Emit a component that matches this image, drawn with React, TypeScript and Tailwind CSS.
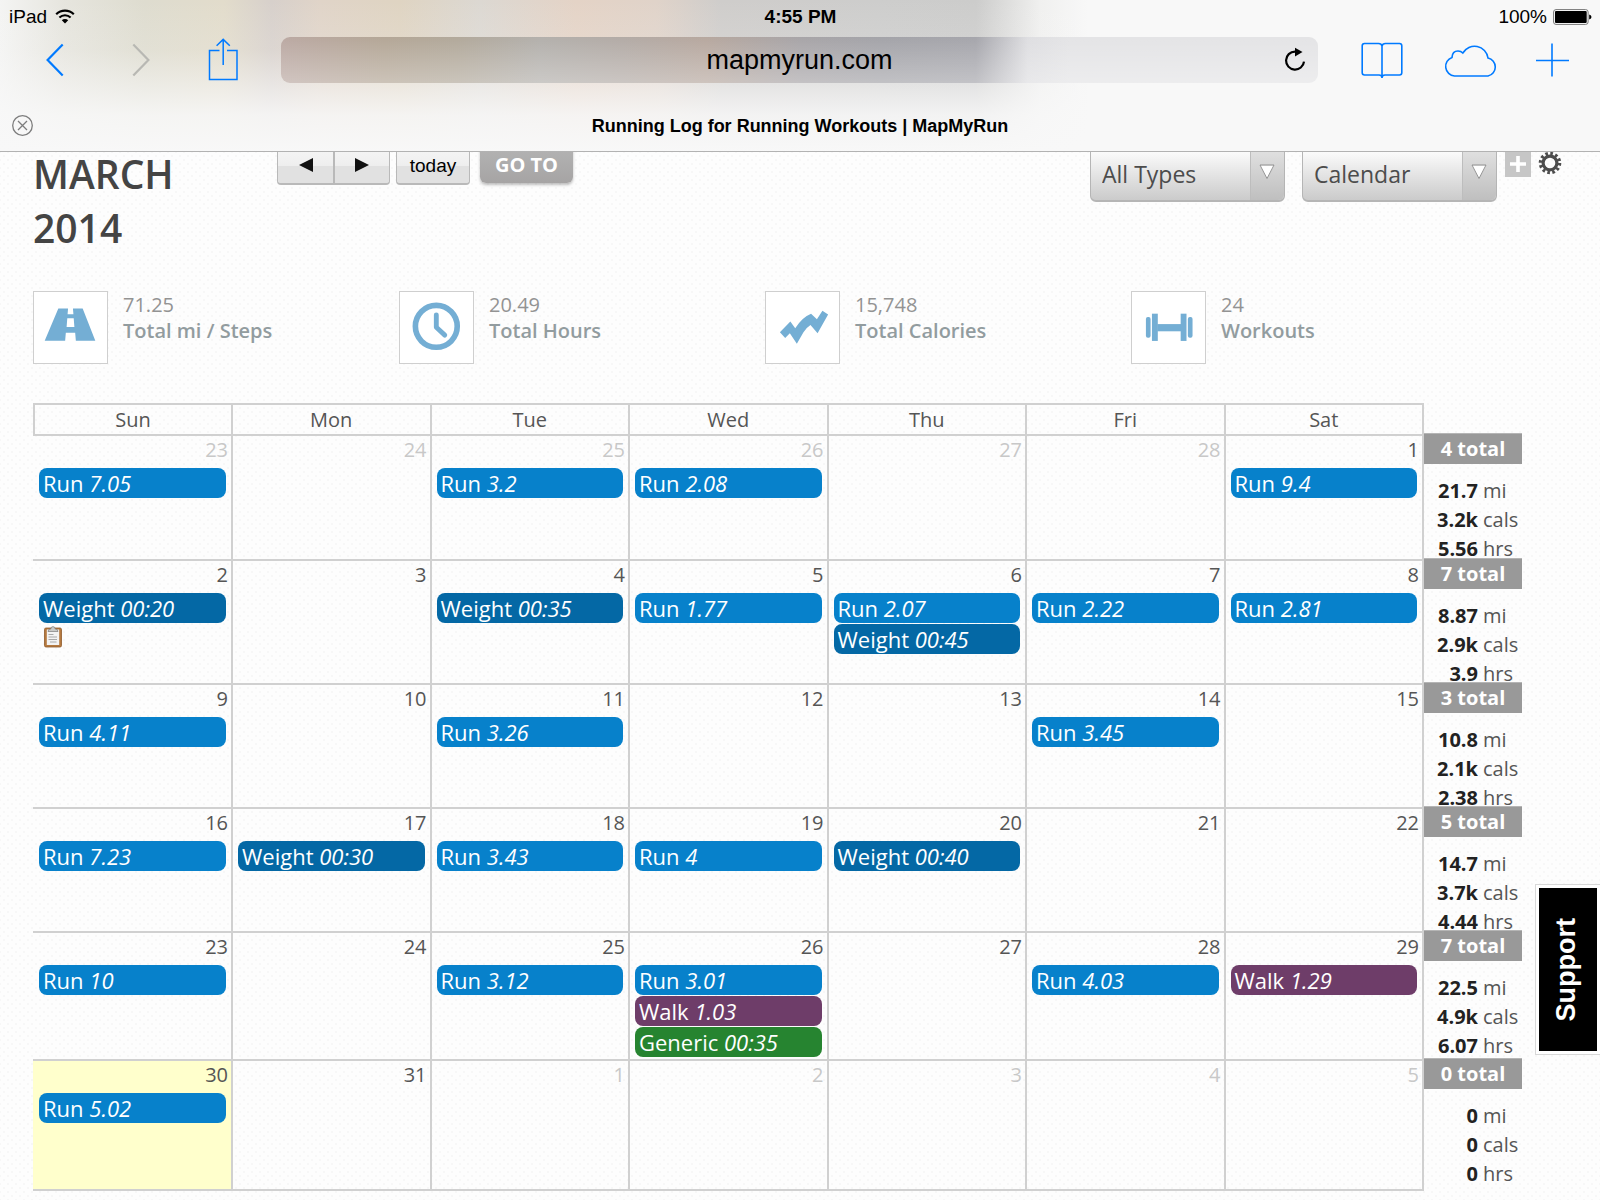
import React from "react";

interface Workout {
  type: "Run" | "Weight" | "Walk" | "Generic";
  value: string;
}

interface Day {
  date: number;
  muted?: boolean;
  today?: boolean;
  note?: boolean;
  workouts?: Workout[];
}

interface Week {
  height: string;
  days: Day[];
  total: number;
  mi: string;
  cals: string;
  hrs: string;
}

const run = (value: string): Workout => ({ type: "Run", value });
const weight = (value: string): Workout => ({ type: "Weight", value });
const walk = (value: string): Workout => ({ type: "Walk", value });
const generic = (value: string): Workout => ({ type: "Generic", value });

const workoutColors = {
  Run: "bg-[#0781cb]",
  Weight: "bg-[#0468a5]",
  Walk: "bg-[#6e3d69]",
  Generic: "bg-[#268430]",
};

const dayNames = ["Sun", "Mon", "Tue", "Wed", "Thu", "Fri", "Sat"];

const weeks: Week[] = [
  {
    height: "h-[125px]",
    days: [
      { date: 23, muted: true, workouts: [run("7.05")] },
      { date: 24, muted: true },
      { date: 25, muted: true, workouts: [run("3.2")] },
      { date: 26, muted: true, workouts: [run("2.08")] },
      { date: 27, muted: true },
      { date: 28, muted: true },
      { date: 1, workouts: [run("9.4")] },
    ],
    total: 4,
    mi: "21.7",
    cals: "3.2k",
    hrs: "5.56",
  },
  {
    height: "h-[124px]",
    days: [
      { date: 2, workouts: [weight("00:20")], note: true },
      { date: 3 },
      { date: 4, workouts: [weight("00:35")] },
      { date: 5, workouts: [run("1.77")] },
      { date: 6, workouts: [run("2.07"), weight("00:45")] },
      { date: 7, workouts: [run("2.22")] },
      { date: 8, workouts: [run("2.81")] },
    ],
    total: 7,
    mi: "8.87",
    cals: "2.9k",
    hrs: "3.9",
  },
  {
    height: "h-[124px]",
    days: [
      { date: 9, workouts: [run("4.11")] },
      { date: 10 },
      { date: 11, workouts: [run("3.26")] },
      { date: 12 },
      { date: 13 },
      { date: 14, workouts: [run("3.45")] },
      { date: 15 },
    ],
    total: 3,
    mi: "10.8",
    cals: "2.1k",
    hrs: "2.38",
  },
  {
    height: "h-[124px]",
    days: [
      { date: 16, workouts: [run("7.23")] },
      { date: 17, workouts: [weight("00:30")] },
      { date: 18, workouts: [run("3.43")] },
      { date: 19, workouts: [run("4")] },
      { date: 20, workouts: [weight("00:40")] },
      { date: 21 },
      { date: 22 },
    ],
    total: 5,
    mi: "14.7",
    cals: "3.7k",
    hrs: "4.44",
  },
  {
    height: "h-[128px]",
    days: [
      { date: 23, workouts: [run("10")] },
      { date: 24 },
      { date: 25, workouts: [run("3.12")] },
      { date: 26, workouts: [run("3.01"), walk("1.03"), generic("00:35")] },
      { date: 27 },
      { date: 28, workouts: [run("4.03")] },
      { date: 29, workouts: [walk("1.29")] },
    ],
    total: 7,
    mi: "22.5",
    cals: "4.9k",
    hrs: "6.07",
  },
  {
    height: "h-[130px]",
    days: [
      { date: 30, today: true, workouts: [run("5.02")] },
      { date: 31 },
      { date: 1, muted: true },
      { date: 2, muted: true },
      { date: 3, muted: true },
      { date: 4, muted: true },
      { date: 5, muted: true },
    ],
    total: 0,
    mi: "0",
    cals: "0",
    hrs: "0",
  },
];

const RoadIcon = () => (
  <svg viewBox="0 0 75 73" className="w-[75px] h-[73px]" fill="#74aed4">
    <path
      fillRule="evenodd"
      d="M25 17h10l-.5 6h6l-.5-6h10l13 33H43l-.7-8H32.7l-.7 8H11zM34.2 27l-.7 9h8l-.7-9z"
    />
  </svg>
);

const ClockIcon = () => (
  <svg
    viewBox="0 0 75 73"
    className="w-[75px] h-[73px]"
    fill="none"
    stroke="#74aed4"
  >
    <circle cx="37.3" cy="35.3" r="21.5" strokeWidth="5.8" />
    <path
      d="M37.3 23.5v12.8l8.7 8"
      strokeWidth="5"
      strokeLinecap="round"
      strokeLinejoin="round"
    />
  </svg>
);

const CaloriesIcon = () => (
  <svg viewBox="0 0 75 73" className="w-[75px] h-[73px]" fill="#74aed4">
    <path d="M14.3 41.3 25 30.3l5 7Q37 26 46.3 22.3l6 5.7L58 19.2l5.800 4L53 42.5 45.7 34Q41 37 38.5 41.5L31.7 53.3l-7.2-10.8-4.8 4.7z" />
  </svg>
);

const DumbbellIcon = () => (
  <svg viewBox="0 0 75 73" className="w-[75px] h-[73px]" fill="#74aed4">
    <rect x="14.3" y="25.7" width="4.8" height="21.4" rx="2" />
    <rect x="20.5" y="22.3" width="6" height="28" />
    <rect x="26" y="33" width="24.5" height="7.4" />
    <rect x="50" y="22.3" width="6" height="28" />
    <rect x="57.4" y="25.7" width="4.8" height="21.4" rx="2" />
  </svg>
);

const stats = [
  { value: "71.25", label: "Total mi / Steps", icon: <RoadIcon /> },
  { value: "20.49", label: "Total Hours", icon: <ClockIcon /> },
  { value: "15,748", label: "Total Calories", icon: <CaloriesIcon /> },
  { value: "24", label: "Workouts", icon: <DumbbellIcon /> },
];

const StatusBar = () => (
  <div className="grid grid-cols-3 items-center h-[37px] pl-[9px] pr-2 pb-1 text-[19px] leading-[30px]">
    <div className="flex items-center gap-2">
      <span>iPad</span>
      <svg viewBox="0 0 20 15" className="w-5 h-[15px]" fill="none" stroke="#000">
        <path d="M1.2 5.2a12.6 12.6 0 0 1 17.6 0" strokeWidth="2.2" />
        <path d="M4.4 8.5a8 8 0 0 1 11.2 0" strokeWidth="2.1" />
        <path d="M10 14.5 6.8 11.2a4.6 4.6 0 0 1 6.4 0z" fill="#000" stroke="none" />
      </svg>
    </div>
    <div className="text-center font-bold">4:55 PM</div>
    <div className="flex items-center justify-end gap-[6px]">
      <span>100%</span>
      <svg viewBox="0 0 39 16" className="w-[39px] h-4">
        <rect x=".6" y=".6" width="34.5" height="14.8" rx="2.4" fill="#fff" stroke="#777" strokeWidth="1" />
        <rect x="2" y="2" width="31.7" height="12" rx="1" fill="#000" />
        <path d="M36.2 5.5q2.3.6 2.3 2.5t-2.3 2.5z" fill="#000" />
      </svg>
    </div>
  </div>
);

const BrowserBar = () => (
  <div className="flex items-center h-[46px] pl-[46px] pr-[30px]">
    <button aria-label="Back">
      <svg viewBox="0 0 18 34" className="w-[18px] h-[34px]" fill="none" stroke="#007aff" strokeWidth="2.2">
        <path d="M16.7 1.5 1.6 17l15.1 15.5" />
      </svg>
    </button>
    <button aria-label="Forward" className="ml-[68px]">
      <svg viewBox="0 0 18 34" className="w-[18px] h-[34px]" fill="none" stroke="#b8b8b3" strokeWidth="2.2">
        <path d="M1.3 1.5 16.4 17 1.3 32.5" />
      </svg>
    </button>
    <button aria-label="Share" className="ml-[58px]">
      <svg viewBox="0 0 30 44" className="w-[30px] h-11" fill="none" stroke="#007aff" strokeWidth="1.5">
        <path d="M11.5 12.5H1.5v29h27.500v-29H19" />
        <path d="M15.2 27V1.6M8.6 7.800l6.600-6.400 6.600 6.400" />
      </svg>
    </button>
    <div className="flex flex-1 items-center h-[46px] ml-[43px] rounded-[9px] bg-[linear-gradient(to_bottom,rgba(255,255,255,0),rgba(255,255,255,0.32)),linear-gradient(to_right,#bba9a3_0%,#b4a797_10%,#b2a99b_17%,#b3b0ac_25%,#b3aba6_33%,#b7a89f_41%,#a8a5a8_50%,#a4a4a9_58%,#a6a6ac_67%,#dedee1_72%,#e4e4e6_76%)]">
      <input
        type="text"
        aria-label="Address"
        defaultValue="mapmyrun.com"
        className="flex-1 min-w-0 ml-[46px] bg-transparent text-center text-[27px] leading-9 outline-none"
      />
      <button aria-label="Reload" className="w-[46px] pl-[12px]">
        <svg viewBox="0 0 22 26" className="w-[22px] h-[26px]" fill="none">
          <path d="M12.5 4.600h-1.500a9 9 0 1 0 9 10" stroke="#000" strokeWidth="2.2" />
          <path d="M11 .8 18.5 5 11 9.400z" fill="#000" />
        </svg>
      </button>
    </div>
    <button aria-label="Bookmarks" className="ml-[43px]">
      <svg viewBox="0 0 42 38" className="w-[42px] h-[38px]" fill="none" stroke="#007aff" strokeWidth="1.6">
        <path d="M21 5Q20.500 2.500 17.500 2.500H3.500Q1.200 2.500 1.200 4.800v27Q1.200 34 3.500 34h14.500q3 0 3 3 0-3 3-3h14.500Q40.800 34 40.800 31.800v-27Q40.800 2.500 38.500 2.500h-14Q21.500 2.500 21 5v32" />
      </svg>
    </button>
    <button aria-label="iCloud tabs" className="ml-[41px]">
      <svg viewBox="0 0 54 36" className="w-[54px] h-9" fill="none" stroke="#007aff" strokeWidth="1.6">
        <path d="M10.500 34A9.600 9.600 0 0 1 8 15.400Q8.300 9 14 9q3 0 4.800 2A13.600 13.600 0 0 1 44 16a9.200 9.200 0 0 1 0 18z" />
      </svg>
    </button>
    <button aria-label="New tab" className="ml-[37px]">
      <svg viewBox="0 0 35 34" className="w-[35px] h-[34px]" stroke="#007aff" strokeWidth="1.6">
        <path d="M1 17.500h33M17 .5v33" />
      </svg>
    </button>
  </div>
);

const BrowserHeader = () => (
  <header className="relative z-10 h-[152px] border-b border-[#b2b2b2] font-['Liberation_Sans',Arial,sans-serif] text-black bg-[linear-gradient(to_bottom,rgba(248,248,248,0)_0px,rgba(248,248,248,0.15)_50px,rgba(248,248,248,0.6)_90px,rgba(248,248,248,0.88)_115px,#f8f8f8_152px),linear-gradient(to_right,#f4f4f3_0%,#e6e5de_4%,#dedccf_9%,#e2dccb_14%,#d7d0cb_17%,#e0d4c8_20%,#dfd4c2_25%,#dcd8d2_30%,#e4d3c6_36%,#e0d3c9_41%,#cfcdcb_45%,#cdcdcc_55%,#cccccb_61%,#f0f0ef_65%,#f8f8f8_68%)]">
    <StatusBar />
    <BrowserBar />
    <div className="flex items-center h-[68px] px-3 pt-[18px]">
      <button aria-label="Close tab">
        <svg viewBox="0 0 22 22" className="w-[22px] h-[22px]" fill="none" stroke="#7d7d7d" strokeWidth="1.3">
          <circle cx="10.500" cy="10.500" r="9.800" />
          <path d="M6 6l9 9M15 6l-9 9" />
        </svg>
      </button>
      <h2 className="flex-1 pr-[22px] text-center text-[18px] font-bold">
        Running Log for Running Workouts | MapMyRun
      </h2>
    </div>
  </header>
);

const Dropdown: React.FC<{ label: string; options: string[] }> = ({
  label,
  options,
}) => (
  <div className="relative w-[195px]">
    <select
      aria-label={label}
      className="appearance-none block w-full h-[55px] pl-[11px] pr-9 rounded-b-md border border-b-2 border-[#b5b5b5] bg-linear-to-b from-white to-[#cbcbcb] text-[23px] text-[#4c4c4c] outline-none"
    >
      {options.map((option) => (
        <option key={option}>{option}</option>
      ))}
    </select>
    <span className="absolute top-px bottom-0.5 right-px flex w-[34px] items-center pl-2 rounded-br-md border-l border-[#bdbdbd] bg-linear-to-b from-[#e2e2e2] to-[#bfbfbf] pointer-events-none">
      <svg viewBox="0 0 16 16" className="w-4 h-4 mb-1" fill="#fff">
        <path d="M1 1.500 8 14.500 15 1.500z" />
        <path d="M1 1h14M1 1l7 13.500L15 1" fill="none" stroke="#8a8a8a" strokeWidth=".9" />
      </svg>
    </span>
  </div>
);

const Toolbar = () => (
  <div className="flex items-start -mt-[5px]">
    <h1 className="w-[244px] shrink-0 text-[39px] leading-[54px] font-semibold text-[#444]">
      <span className="block">MARCH</span>
      <span className="block">2014</span>
    </h1>
    <div className="flex font-['Liberation_Sans',Arial,sans-serif] text-[19px] text-black">
      <button
        aria-label="Previous month"
        className="flex items-center justify-center w-[56px] h-[38px] border-l border-b-2 border-[#b9b9b9] rounded-bl-sm bg-[linear-gradient(to_bottom,#f6f6f6_0%,#eeeeee_52%,#e1e1e1_54%,#e1e1e1_100%)]"
      >
        <svg viewBox="0 0 14 14" className="w-[14px] h-[14px]">
          <path d="M14 0v14L0 7z" fill="#111" />
        </svg>
      </button>
      <button
        aria-label="Next month"
        className="flex items-center justify-center w-[57px] h-[38px] border-r border-l-2 border-b-2 border-[#b9b9b9] rounded-br-sm bg-[linear-gradient(to_bottom,#f6f6f6_0%,#eeeeee_52%,#e1e1e1_54%,#e1e1e1_100%)]"
      >
        <svg viewBox="0 0 14 14" className="w-[14px] h-[14px]">
          <path d="M0 0v14l14-7z" fill="#111" />
        </svg>
      </button>
      <button className="w-[74px] h-[38px] ml-[6px] pt-0.5 border-x border-b-2 border-[#b9b9b9] rounded-b-sm bg-[linear-gradient(to_bottom,#f6f6f6_0%,#eeeeee_52%,#e1e1e1_54%,#e1e1e1_100%)]">
        today
      </button>
    </div>
    <button className="w-[93px] h-9 ml-[10px] rounded-b-md bg-linear-to-b from-[#b3b3b3] to-[#a6a4a4] shadow-[0_2px_3px_rgba(0,0,0,0.25)] text-xl font-bold text-white">
      GO TO
    </button>
    <div className="flex items-start ml-auto gap-[17px]">
      <Dropdown label="Workout type" options={["All Types", "Run", "Walk", "Weight"]} />
      <Dropdown label="View" options={["Calendar", "List"]} />
    </div>
    <div className="flex items-start gap-[7px] pt-[4px] pl-[8px] pr-[5px]">
      <button aria-label="Add workout" className="w-[26px] h-[26px] bg-[#c6c6c6]">
        <svg viewBox="0 0 26 26" className="w-[26px] h-[26px]" stroke="#fff" strokeWidth="3.600">
          <path d="M5 13h16M13 5v16" />
        </svg>
      </button>
      <button aria-label="Settings">
        <svg viewBox="0 0 24 24" className="w-6 h-6" fill="none" stroke="#4d4d4d">
          <circle cx="12" cy="12" r="6.900" strokeWidth="3.200" />
          <circle cx="12" cy="12" r="9.600" strokeWidth="3.400" strokeDasharray="2.600 2.427" />
        </svg>
      </button>
    </div>
  </div>
);

const ClipboardIcon = () => (
  <svg viewBox="0 0 20 22" className="w-5 h-[22px] mt-[3px] ml-[9px]">
    <rect x="1.500" y="2" width="17" height="19" rx="1.500" fill="#b5793f" stroke="#8f5a2b" strokeWidth=".8" />
    <rect x="3.800" y="3.500" width="12.400" height="15.500" fill="#f3f3f3" />
    <path d="M5.500 8.500h5M5.500 11h8.500M5.500 13.500h8.500M7 16h6.500" stroke="#a9a9a9" strokeWidth="1" />
    <path d="M5 5.500q0-2.500 2.800-2.500Q8 .6 10 .6t2.200 2.400Q15 3 15 5.500z" fill="#c9c9c6" stroke="#7d7d7d" strokeWidth=".7" />
  </svg>
);

const DayCell: React.FC<{ day: Day }> = ({ day }) => (
  <td
    className={`p-0 first:pl-px align-top border-r-2 border-b-2 border-[#d0d0d0] ${
      day.today ? "bg-[#ffffcc]" : ""
    }`}
  >
    <div
      className={`pr-[3px] mb-[5px] text-right text-xl leading-[27px] ${
        day.muted ? "text-[#c8c8c8]" : "text-[#555]"
      }`}
    >
      {day.date}
    </div>
    {day.workouts?.map((workout) => (
      <a
        key={workout.type}
        href="#"
        className={`block h-[30px] mx-[5px] mb-px pl-1 rounded-lg text-[22px] leading-[30px] text-white whitespace-nowrap ${
          workoutColors[workout.type]
        }`}
      >
        {workout.type} <em>{workout.value}</em>
      </a>
    ))}
    {day.note && <ClipboardIcon />}
  </td>
);

const WeekSummary: React.FC<{ week: Week }> = ({ week }) => (
  <td className="p-0 align-top text-xl text-[#555]">
    <div className="-mt-[3px] h-[124px] overflow-hidden">
      <div className="h-[31px] leading-[29px] border-t border-[#b5b5b5] bg-[#999] text-center font-bold text-white">
        {week.total} total
      </div>
      <dl className="grid grid-cols-[54px_1fr] gap-x-[5px] pt-[12px] leading-[29px]">
        <dd className="text-right font-bold text-[#222]">{week.mi}</dd>
        <dt>mi</dt>
        <dd className="text-right font-bold text-[#222]">{week.cals}</dd>
        <dt>cals</dt>
        <dd className="text-right font-bold text-[#222]">{week.hrs}</dd>
        <dt>hrs</dt>
      </dl>
    </div>
  </td>
);

export default function App() {
  return (
    <div className="min-h-screen overflow-hidden font-['Open_Sans',sans-serif] bg-[#fdfdfd] bg-[radial-gradient(#f7f7f7_1px,transparent_1px),radial-gradient(#f7f7f7_1px,transparent_1px)] bg-[length:8px_8px] bg-[position:0_0,4px_4px]">
      <BrowserHeader />
      <main className="px-[33px]">
        <Toolbar />
        <section className="grid grid-cols-4 mt-9 mr-[70px]">
          {stats.map((stat) => (
            <div key={stat.label} className="flex">
              <div className="flex items-center justify-center w-[75px] h-[73px] bg-white border border-[#cfcfcf]">
                {stat.icon}
              </div>
              <div className="pl-[15px] pt-px text-xl leading-[26px] text-[#939393]">
                <div>{stat.value}</div>
                <div className="font-semibold text-[#929c9f]">{stat.label}</div>
              </div>
            </div>
          ))}
        </section>
        <div className="mt-[39px] mr-[45px]">
          <table className="w-full table-fixed border-separate border-spacing-0">
            <thead>
              <tr>
                {dayNames.map((name) => (
                  <th
                    key={name}
                    className="h-[33px] p-0 first:w-[200px] border-y-2 border-r-2 first:border-l-2 border-[#d0d0d0] text-xl leading-[27px] font-normal text-[#555]"
                  >
                    {name}
                  </th>
                ))}
                <td className="w-[98px]" />
              </tr>
            </thead>
            <tbody>
              {weeks.map((week, i) => (
                <tr key={i} className={week.height}>
                  {week.days.map((day) => (
                    <DayCell key={day.date} day={day} />
                  ))}
                  <WeekSummary week={week} />
                </tr>
              ))}
            </tbody>
          </table>
        </div>
      </main>
      <button className="fixed right-0 top-[885px] flex items-center justify-center w-16 h-[169px] pr-[3px] border-[3px] border-white outline outline-[#d8d8d8] bg-black font-['Liberation_Sans',Arial,sans-serif] text-[27px] font-bold text-white">
        <span className="[writing-mode:vertical-rl] rotate-180">Support</span>
      </button>
    </div>
  );
}
